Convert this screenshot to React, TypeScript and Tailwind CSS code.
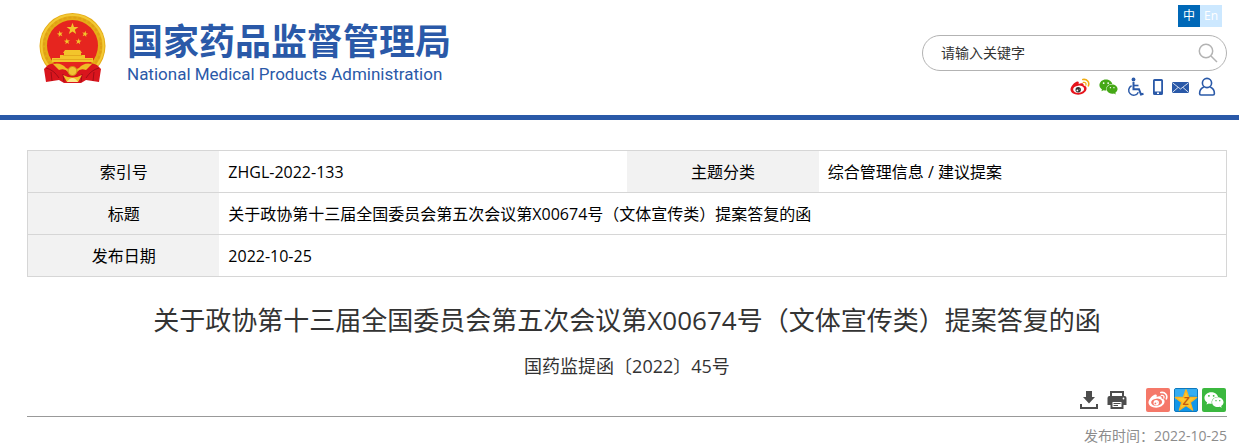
import { FaWeixin } from "react-icons/fa";

const STAR = "0,-10 2.4,-3.2 9.5,-3.1 3.8,1.2 5.9,8.1 0,4 -5.9,8.1 -3.8,1.2 -9.5,-3.1 -2.4,-3.2";

const SMALL_STARS = [
  "translate(21 22) rotate(-12) scale(.32)",
  "translate(46 22) rotate(12) scale(.32)",
  "translate(28 29.500) rotate(-6) scale(.32)",
  "translate(39.500 29.500) rotate(6) scale(.32)",
];

function Emblem() {
  return (
    <svg viewBox="0 0 68 72" className="h-[72px] w-[68px] shrink-0" aria-hidden="true">
      <circle cx="33.500" cy="34" r="33" fill="#e5ac17" />
      <circle cx="33.500" cy="34" r="31" fill="none" stroke="#f3c934" strokeWidth="2" />
      <circle cx="33.500" cy="34" r="28.500" fill="none" stroke="#dfa015" strokeWidth="2" strokeDasharray="3 2" />
      <circle cx="33.500" cy="33.500" r="25.500" fill="#e6251f" />
      <g fill="#f3c52b">
        <polygon points={STAR} transform="translate(33.500 17) scale(.62)" />
        {SMALL_STARS.map((t) => (
          <polygon key={t} points={STAR} transform={t} />
        ))}
        <path d="M24 41 L26 38 H41 L43 41 H42 V43 H46 V46 H54 V50 H13 V46 H21 V43 H25 V41Z" />
      </g>
      <path d="M24 43.500H43M14 47.500H53" stroke="#e0a21a" strokeWidth=".8" />
      <path d="M9 53 Q19 48 27 57 Q33.500 60 40 57 Q48 48 58 53 L62 57 L60 70 L47 68 L42 71 H25 L20 68 L7 70 L5 57Z" fill="#d9151d" />
      <path d="M14 52 Q22 50 27 56 Q33.500 60 40 56 Q45 50 53 52 L47 58 Q41 56 38 60 H29 Q26 56 20 58Z" fill="#efbc25" />
      <path d="M7 56 Q15 58 20 66 M60 56 Q52 58 47 66 M12 60 L13 69 M55 60 L54 69 M24 62 L25 70 M43 62 L42 70" stroke="#a00d17" fill="none" />
      <circle cx="33.500" cy="59" r="4.500" fill="#f1c334" stroke="#cf8d12" />
      <path d="M24 63 Q33.500 68 43 63 L39 70 H28Z" fill="#f1c52c" />
      <path d="M28 70 Q33.500 62 39 70Z" fill="#fbe88c" />
    </svg>
  );
}

type WeiboProps = { className: string; body: string; eye: string; iris: string; wave: string };

function Weibo({ className, body, eye, iris, wave }: WeiboProps) {
  return (
    <svg viewBox="0 0 20 18" className={className} aria-hidden="true">
      <path
        d="M7.500 3.600C8.800 3.500 9.100 4.500 8.600 5.900C11 4.900 14 4.700 13.700 7.500C15.900 8.200 17 9.200 16.500 11.300C15.700 14.500 12 16.700 8.200 16.700C3.900 16.700.500 14.600.500 11.600C.500 8.500 4.700 3.900 7.500 3.600Z"
        fill={body}
      />
      <ellipse cx="8.600" cy="11.300" rx="5.500" ry="3.600" fill={eye} transform="rotate(-6 8 11)" />
      <circle cx="8.200" cy="11.700" r="2.700" fill={iris} />
      <circle cx="7.400" cy="12.400" r=".9" fill={eye} />
      <circle cx="9.200" cy="11.200" r=".4" fill={eye} />
      <path d="M12.800 1.500C16.900.700 19.800 4 18.400 7.800" stroke={wave} strokeWidth="1.600" strokeLinecap="round" fill="none" />
      <path d="M13.300 4.400C15.300 4 16.500 5.300 15.900 7.100" stroke={wave} strokeWidth="1.300" strokeLinecap="round" fill="none" />
    </svg>
  );
}

function WheelchairIcon() {
  return (
    <svg viewBox="0 0 17 20" className="h-5 w-[17px]" fill="none" stroke="#2a59a8" aria-hidden="true">
      <circle cx="6.500" cy="2.500" r="1.900" fill="#2a59a8" stroke="none" />
      <path d="M6.500 5V12.200H12L14 17.500L16.500 16.800" strokeWidth="2" />
      <path d="M6.500 8.500H11.500" strokeWidth="1.600" />
      <path d="M4.600 8.700A5 5 0 1 0 11.300 15.200" strokeWidth="1.500" />
    </svg>
  );
}

function PhoneIcon() {
  return (
    <svg viewBox="0 0 10 16" className="h-4 w-[10px]" aria-hidden="true">
      <path fillRule="evenodd" d="M1.500 0H8.500Q10 0 10 1.500V14.500Q10 16 8.500 16H1.500Q0 16 0 14.500V1.500Q0 0 1.500 0ZM1.800 2V12.500H8.200V2ZM4 13.500V15H6V13.500Z" fill="#2a59a8" />
    </svg>
  );
}

function MailIcon() {
  return (
    <svg viewBox="0 0 17 11" className="h-[11px] w-[17px]" aria-hidden="true">
      <rect width="17" height="11" rx="1" fill="#2a59a8" />
      <path d="M.5 .8L8.500 7L16.500 .8M.5 10.300L6 5.500M16.500 10.300L11 5.500" stroke="#fff" strokeWidth=".8" fill="none" />
    </svg>
  );
}

function UserIcon() {
  return (
    <svg viewBox="0 0 18 20" className="h-5 w-[18px]" fill="none" stroke="#2a59a8" strokeWidth="1.600" aria-hidden="true">
      <circle cx="9" cy="6" r="4.600" />
      <path d="M5.800 10Q1.600 11.800 1.600 16.500Q1.600 18 3 18H15Q16.400 18 16.400 16.500Q16.400 11.800 12.200 10" />
    </svg>
  );
}

function DownloadIcon() {
  return (
    <svg viewBox="0 0 18 18" className="h-[18px] w-[18px]" aria-hidden="true">
      <path d="M6 0H12V6H15L9 12.500L3 6H6Z" fill="#4d4d4d" />
      <path d="M1 13V17H17V13" fill="none" stroke="#4d4d4d" strokeWidth="2" />
    </svg>
  );
}

function PrintIcon() {
  return (
    <svg viewBox="0 0 20 18" className="h-[18px] w-5" aria-hidden="true">
      <path d="M4 5V1H16V5" fill="none" stroke="#4d4d4d" strokeWidth="2" />
      <path d="M2.500 5H17.500Q19.500 5 19.500 7V14H.5V7Q.5 5 2.500 5Z" fill="#4d4d4d" />
      <path d="M4.500 10H15.500V17H4.500Z" fill="#fff" stroke="#4d4d4d" strokeWidth="2" />
      <path d="M6.500 12.500H13.500M6.500 14.500H11" stroke="#4d4d4d" />
      <circle cx="16.500" cy="7.500" r=".9" fill="#fff" />
    </svg>
  );
}

function QzoneIcon() {
  return (
    <svg viewBox="0 0 24 24" className="h-6 w-6" aria-hidden="true">
      <rect x=".5" y=".5" width="23" height="23" rx="1.500" fill="#1296e8" stroke="#0d78bd" />
      <path d="M1 1H23V8Q12 6 1 12Z" fill="#35adf2" />
      <polygon points={STAR} transform="translate(12 13) scale(1.120)" fill="#fdc72f" stroke="#fbb41f" strokeWidth="1.200" strokeLinejoin="round" />
      <text x="12" y="17" textAnchor="middle" fontSize="10" fontWeight="700" fontStyle="italic" fill="#c75b0a" fontFamily="Liberation Sans, sans-serif">
        Z
      </text>
    </svg>
  );
}

const labelCell = "bg-[#f2f2f2] px-2 text-center font-normal";
const valueCell = "px-[9px]";

export default function App() {
  return (
    <div className="w-full bg-white font-['Open_Sans','Noto_Sans_CJK_SC',sans-serif] text-black">
      <header className="flex justify-between border-b-[5px] border-[#2a59a8] pr-3 pl-[39px]">
        <a href="#" className="flex h-[115px] items-start gap-5 pt-3 text-[#2a59a8]">
          <Emblem />
          <span className="flex flex-col gap-1 pt-2">
            <span className="font-['Noto_Sans_CJK_SC',sans-serif] text-[36px] leading-[38px] font-bold whitespace-nowrap">国家药品监督管理局</span>
            <span className="font-[Roboto,sans-serif] text-[17px] leading-6 whitespace-nowrap">National Medical Products Administration</span>
          </span>
        </a>

        <div className="flex w-[305px] flex-col pt-[5px]">
          <div className="mr-[5px] flex self-end text-[12px] leading-[22px] text-white">
            <a href="#" className="w-[22px] bg-[#0068b7] text-center">中</a>
            <a href="#" className="w-[22px] bg-[#cce8ff] text-center">En</a>
          </div>
          <form className="mt-2 flex h-9 items-center rounded-full border border-[#b3b3b3] pr-2 pl-[18px]">
            <input
              type="text"
              aria-label="请输入关键字"
              placeholder="请输入关键字"
              className="min-w-0 flex-1 bg-transparent text-[14px] leading-5 outline-none placeholder:text-[#333]"
            />
            <button type="button" aria-label="搜索">
              <svg viewBox="0 0 20 20" className="h-5 w-5" fill="none" stroke="#b3b3b3" strokeWidth="1.500">
                <circle cx="8" cy="8" r="6.700" />
                <path d="M13 13L19 19" />
              </svg>
            </button>
          </form>
          <nav className="mt-[6px] mr-[11px] flex h-5 items-center gap-[9px] self-end">
            <a href="#" aria-label="微博">
              <Weibo className="h-[18px] w-5" body="#e6141c" eye="#fff" iris="#333" wave="#f0ac13" />
            </a>
            <a href="#" aria-label="微信">
              <FaWeixin className="h-5 w-[19px] text-[#45a816]" />
            </a>
            <a href="#" aria-label="无障碍">
              <WheelchairIcon />
            </a>
            <a href="#" aria-label="手机版">
              <PhoneIcon />
            </a>
            <a href="#" aria-label="邮箱">
              <MailIcon />
            </a>
            <a href="#" aria-label="个人中心">
              <UserIcon />
            </a>
          </nav>
        </div>
      </header>

      <main className="pt-[30px] pr-3 pl-[27px]">
        <table className="w-full table-fixed border-collapse border border-[#d6d6d6] text-[16px] leading-6">
          <colgroup>
            <col className="w-[16%]" />
            <col className="w-[34%]" />
            <col className="w-[16%]" />
            <col className="w-[34%]" />
          </colgroup>
          <tbody>
            <tr className="h-[42px] border-b border-[#d6d6d6]">
              <th scope="row" className={labelCell}>索引号</th>
              <td className={valueCell}>ZHGL-2022-133</td>
              <th scope="row" className={labelCell}>主题分类</th>
              <td className={valueCell}>综合管理信息 / 建议提案</td>
            </tr>
            <tr className="h-[42px] border-b border-[#d6d6d6]">
              <th scope="row" className={labelCell}>标题</th>
              <td colSpan={3} className={valueCell}>关于政协第十三届全国委员会第五次会议第X00674号（文体宣传类）提案答复的函</td>
            </tr>
            <tr className="h-[42px]">
              <th scope="row" className={labelCell}>发布日期</th>
              <td colSpan={3} className={valueCell}>2022-10-25</td>
            </tr>
          </tbody>
        </table>

        <h1 className="mt-[23px] text-center text-[26px] leading-10 text-[#333]">
          关于政协第十三届全国委员会第五次会议第X00674号（文体宣传类）提案答复的函
        </h1>
        <p className="mt-3 text-center text-[18px] leading-7 text-[#333]">国药监提函〔2022〕45号</p>

        <div className="mt-2 flex items-center justify-end border-b border-[#999] pb-1">
          <button type="button" aria-label="下载" className="mr-[9px]">
            <DownloadIcon />
          </button>
          <button type="button" aria-label="打印" className="mr-[19px]">
            <PrintIcon />
          </button>
          <div className="mr-px flex gap-1">
            <a href="#" aria-label="分享到微博" className="flex h-6 w-6 items-center justify-center rounded-xs bg-[#f57869]">
              <Weibo className="h-[18px] w-5" body="#fff" eye="#f57869" iris="#fff" wave="#fff" />
            </a>
            <a href="#" aria-label="分享到QQ空间">
              <QzoneIcon />
            </a>
            <a href="#" aria-label="分享到微信" className="flex h-6 w-6 items-center justify-center rounded-xs bg-[#3bb83f]">
              <FaWeixin className="h-5 w-5 text-white" />
            </a>
          </div>
        </div>
        <p className="mt-[7px] text-right text-[14px] leading-6 text-[#8c8c8c]">发布时间：2022-10-25</p>
      </main>
    </div>
  );
}
